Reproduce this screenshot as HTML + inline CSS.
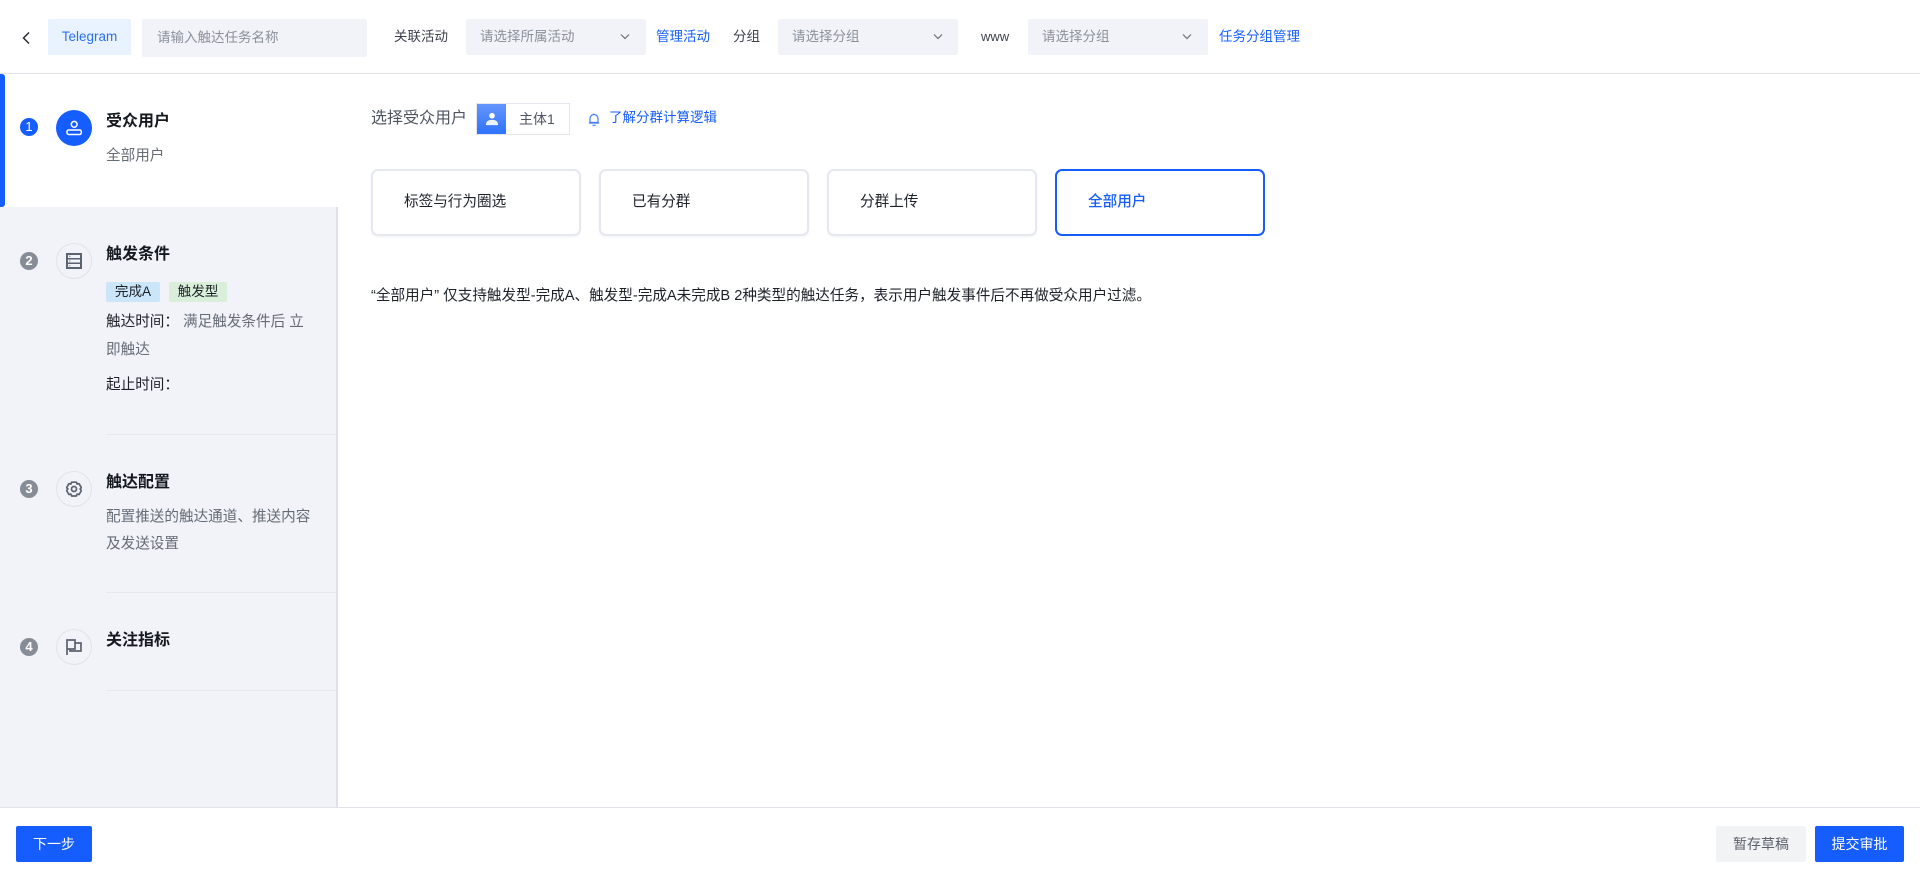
<!DOCTYPE html>
<html lang="zh-CN">
<head>
<meta charset="utf-8">
<title>触达任务</title>
<style>
html,body{margin:0;padding:0;background:#fff;}
body{width:1920px;height:878px;overflow:hidden;position:relative;font-family:"Liberation Sans","Noto Sans CJK SC",sans-serif;font-size:14.6px;color:#1d2129;}
.a{position:absolute;white-space:nowrap;}
.t{position:absolute;white-space:nowrap;line-height:20px;height:20px;}
.h{font-size:13.5px;}
.sel{position:absolute;top:19px;width:180px;height:36px;background:#f1f3f8;border-radius:2px;}
.ph{color:#8b909a;font-size:13.5px;}
.lnk{color:#165dff;font-size:13.5px;}
.lab{color:#3d424c;font-size:13.5px;}
.card{position:absolute;top:169px;width:206px;height:63px;border:2px solid #e6e8f0;border-radius:7px;background:#fff;box-shadow:0 1px 2px rgba(30,40,80,.06);}
.card span{position:absolute;left:31px;top:21px;line-height:20px;color:#1d2129;}
.num{position:absolute;left:20px;width:18px;height:18px;border-radius:50%;background:#868d97;color:#fff;font-size:13px;font-weight:bold;line-height:18px;text-align:center;}
.ico{position:absolute;left:56px;width:34px;height:34px;border:1px solid #e1e3ea;border-radius:50%;}
.ico svg{position:absolute;left:9px;top:9px;}
.tt{position:absolute;left:106px;font-size:16px;font-weight:bold;line-height:24px;color:#14181f;white-space:nowrap;}
.d{position:absolute;left:106px;line-height:26px;color:#666c76;white-space:nowrap;}
.hr{position:absolute;left:106px;width:230px;height:1px;background:#e6e8ee;}
.btn{position:absolute;top:826px;height:36px;line-height:36px;text-align:center;border-radius:2px;font-size:14px;}
.tag{position:absolute;top:282px;height:20px;line-height:19px;border-radius:2px;text-align:center;font-size:13.6px;color:#1d2129;}
</style>
</head>
<body>

<!-- header -->
<svg class="a" style="left:20px;top:31px" width="12" height="14" viewBox="0 0 12 14"><path d="M9 1.500 3.500 7 9 12.500" fill="none" stroke="#1d2129" stroke-width="1.400"/></svg>
<div class="a h" style="left:48px;top:19px;width:83px;height:36px;line-height:35px;background:#e8f3ff;border-radius:2px;text-align:center;color:#2b6ff5;">Telegram</div>
<div class="a ph" style="left:142px;top:19px;width:210px;padding-left:15px;height:38px;line-height:37px;background:#f1f3f8;border-radius:2px;">请输入触达任务名称</div>

<div class="t lab" style="left:394px;top:27px;">关联活动</div>
<div class="sel" style="left:466px;"><span class="t ph" style="left:14px;top:8px;">请选择所属活动</span>
<svg class="a" style="left:154px;top:14px" width="10" height="8" viewBox="0 0 10 8"><path d="M1 1.500 5 5.500l4-4" fill="none" stroke="#6b7079" stroke-width="1.200"/></svg></div>
<div class="t lnk" style="left:656px;top:27px;">管理活动</div>

<div class="t lab" style="left:733px;top:27px;">分组</div>
<div class="sel" style="left:778px;"><span class="t ph" style="left:14px;top:8px;">请选择分组</span>
<svg class="a" style="left:155px;top:14px" width="10" height="8" viewBox="0 0 10 8"><path d="M1 1.500 5 5.500l4-4" fill="none" stroke="#6b7079" stroke-width="1.200"/></svg></div>

<div class="t lab" style="left:981px;top:27px;font-size:13px;">www</div>
<div class="sel" style="left:1028px;"><span class="t ph" style="left:14px;top:8px;">请选择分组</span>
<svg class="a" style="left:154px;top:14px" width="10" height="8" viewBox="0 0 10 8"><path d="M1 1.500 5 5.500l4-4" fill="none" stroke="#6b7079" stroke-width="1.200"/></svg></div>
<div class="t lnk" style="left:1219px;top:27px;">任务分组管理</div>

<div class="a" style="left:0;top:73px;width:1920px;height:1px;background:#e1e3e8;"></div>

<!-- side panel -->
<div class="a" style="left:0;top:207px;width:336px;height:600px;background:#f1f3f8;border-right:2px solid #dfe2e9;"></div>
<div class="a" style="left:0;top:74px;width:5px;height:133px;background:#165dff;border-radius:0 3px 3px 0;"></div>

<!-- step 1 -->
<div class="num" style="top:118px;background:#165dff;font-weight:normal;">1</div>
<div class="a" style="left:56px;top:110px;width:36px;height:36px;border-radius:50%;background:#165dff;">
<svg class="a" style="left:9px;top:9px" width="18" height="18" viewBox="0 0 18 18"><circle cx="9.200" cy="5.300" r="2.900" fill="none" stroke="#fff" stroke-width="1.500"/><rect x="2" y="11" width="14.300" height="4.500" rx="1.600" fill="none" stroke="#fff" stroke-width="1.500"/></svg></div>
<div class="tt" style="top:110px;">受众用户</div>
<div class="d" style="top:143px;">全部用户</div>

<!-- step 2 -->
<div class="num" style="top:252px;">2</div>
<div class="ico" style="top:243px;"><svg width="16" height="16" viewBox="0 0 16 16"><rect x="1" y="1" width="14" height="14" fill="none" stroke="#5b6270" stroke-width="2"/><path d="M1 5.700h14M1 10.300h14" stroke="#5b6270" stroke-width="1.500"/><path d="M3 3.300h1.500M3 8h1.500M3 12.700h1.500" stroke="#8a909a" stroke-width="1"/></svg></div>
<div class="tt" style="top:243px;">触发条件</div>
<div class="tag" style="left:106px;width:54px;background:#cbe6f9;">完成A</div>
<div class="tag" style="left:169px;width:58px;background:#d9efd9;">触发型</div>
<div class="d" style="top:309px;"><span style="color:#1d2129">触达时间：</span> 满足触发条件后 立</div>
<div class="d" style="top:337px;">即触达</div>
<div class="d" style="top:372px;color:#1d2129;">起止时间：</div>
<div class="hr" style="top:434px;"></div>

<!-- step 3 -->
<div class="num" style="top:480px;">3</div>
<div class="ico" style="top:471px;"><svg width="16" height="16" viewBox="0 0 16 16"><path d="M5.600 1.200h4.800l.7 1.900 2-.4 2.300 4-1.300 1.300 1.300 1.500-2.300 4-2-.4-.7 1.900H5.600l-.7-1.900-2 .4-2.300-4L1.900 8 .6 6.700l2.300-4 2 .4z" fill="none" stroke="#5b6270" stroke-width="1.700" stroke-linejoin="round"/><circle cx="8" cy="8" r="2.500" fill="none" stroke="#5b6270" stroke-width="1.700"/></svg></div>
<div class="tt" style="top:471px;">触达配置</div>
<div class="d" style="top:504px;">配置推送的触达通道、推送内容</div>
<div class="d" style="top:531px;">及发送设置</div>
<div class="hr" style="top:592px;"></div>

<!-- step 4 -->
<div class="num" style="top:638px;">4</div>
<div class="ico" style="top:629px;"><svg width="16" height="16" viewBox="0 0 16 16"><path d="M1 16V1h8v9H1" fill="none" stroke="#5b6270" stroke-width="1.700"/><path d="M9 4h6v8H4v-2" fill="none" stroke="#5b6270" stroke-width="1.700"/></svg></div>
<div class="tt" style="top:629px;">关注指标</div>
<div class="hr" style="top:690px;"></div>

<!-- main -->
<div class="a" style="left:371px;top:107px;font-size:16px;line-height:24px;color:#4e5460;">选择受众用户</div>
<div class="a" style="left:476px;top:103px;width:92px;height:30px;border:1px solid #e4e7ef;background:#fff;">
  <div class="a" style="left:0;top:0;width:29px;height:30px;background:linear-gradient(180deg,#6595fb,#2f72ff);"></div>
  <svg class="a" style="left:8px;top:8px" width="14" height="14" viewBox="0 0 15 15"><circle cx="7.500" cy="4" r="3" fill="#fff"/><path d="M1 14c0-4 2.500-5.500 6.500-5.500S14 10 14 14z" fill="#fff" opacity=".9"/></svg>
  <span class="t" style="left:42px;top:5px;color:#4e5460;font-size:14px;">主体1</span>
</div>
<svg class="a" style="left:587px;top:112px" width="14" height="15" viewBox="0 0 14 15"><path d="M3 10.500V6.500a4 4 0 0 1 8 0v4zM1.800 11h10.400M5.500 13.300h3M7 1.500v1" fill="none" stroke="#3f7bf5" stroke-width="1.200"/></svg>
<div class="t lnk" style="left:609px;top:108px;">了解分群计算逻辑</div>

<div class="card" style="left:371px;"><span>标签与行为圈选</span></div>
<div class="card" style="left:599px;"><span>已有分群</span></div>
<div class="card" style="left:827px;"><span>分群上传</span></div>
<div class="card" style="left:1055px;border-color:#165dff;box-shadow:none;"><span style="color:#165dff;font-weight:500;">全部用户</span></div>

<div class="t" style="left:371px;top:286px;color:#1d2129;">“全部用户” 仅支持触发型-完成A、触发型-完成A未完成B 2种类型的触达任务，表示用户触发事件后不再做受众用户过滤。</div>

<!-- footer -->
<div class="a" style="left:0;top:807px;width:1920px;height:1px;background:#e1e3e8;"></div>
<div class="btn" style="left:16px;width:76px;background:#165dff;color:#fff;">下一步</div>
<div class="btn" style="left:1716px;width:90px;background:#f2f3f5;color:#5c626c;">暂存草稿</div>
<div class="btn" style="left:1815px;width:89px;background:#165dff;color:#fff;">提交审批</div>

</body>
</html>
